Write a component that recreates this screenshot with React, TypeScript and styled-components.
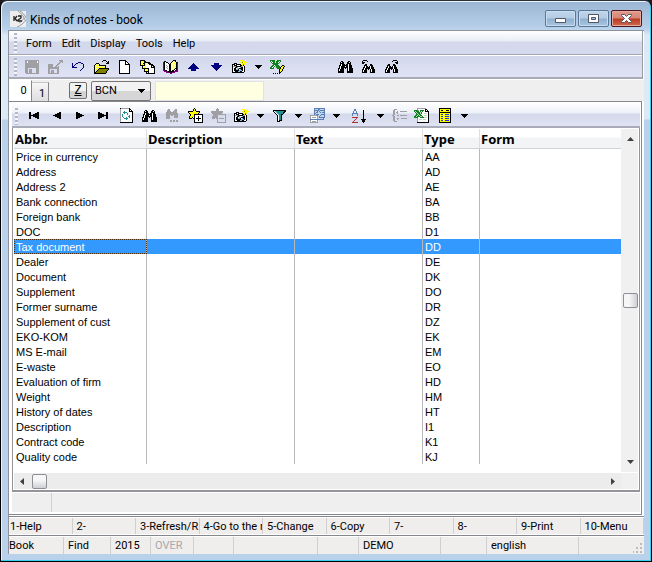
import React from "react";
import styled, { createGlobalStyle, css } from "styled-components";

/* ---------- pixel icons ---------- */

const palette: Record<string, string> = {
  k: "#000000",
  w: "#ffffff",
  y: "#ffff00",
  l: "#ffffa0",
  g: "#a0a0a4",
  d: "#60646c",
  n: "#000080",
  b: "#2038e0",
  c: "#7fb8d8",
  o: "#808000",
  p: "#800080",
  e: "#108020",
  f: "#b8d8b8",
  t: "#209090",
  r: "#b03030",
  s: "#5a7fb5",
  a: "#c4d4ea",
};

const art = {
  save: [
    "gggggggggggggg", "ggwgggggggggwg", "ggwgggggggggwg", "gggggggggggggg", "gggggggggggggg", "gggggggggggggg",
    "gggggggggggggg", "gggggggggggggg", "ggg........ggg", "ggg.ggg....ggg", "ggg.ggg....ggg", "ggg.ggg....ggg",
    "ggg.ggg....ggg", ".ggggggggggggg",
  ],
  exportFile: [
    "...........gggg", "............ggg", "...........gg.g", "..........gg...", "ggggg....gg....", "ggggg...gg.....",
    "ggggg..gg.g....", "ggggggggggg....", "ggggggggggg....", "gg.......gg....", "gg.ggg...gg....", "gg.ggg...gg....",
    "gg.ggg...gg....", "ggggggggggg....",
  ],
  undo: [
    "......nnn....", "n...nn...nn..", "n..n.......n.", "n.n........n.", "nn.........n.", "nnnnn......n.", "..........n..",
    ".........n...", "........n....",
  ],
  open: [
    ".........kkk...", "........k...k.k", ".............kk", "..kkk.......kkk", ".klylk.........", "klylykkkkkkk...",
    "kylylylylylk...", "klylylylylyk...", "kyly.kkkkkkkkkk", "kly.koooooooook", "ky.koooooooook.", "kykoooooooook..",
    "kkooooooooook..", "kkkkkkkkkkkk...",
  ],
  page: [
    "kkkkkkk....", "kwwwwwkk...", "kwwwwwkwk..", "kwwwwwkwwk.", "kwwwwwkkkkk", "kwwwwwwwwwk", "kwwwwwwwwwk",
    "kwwwwwwwwwk", "kwwwwwwwwwk", "kwwwwwwwwwk", "kwwwwwwwwwk", "kwwwwwwwwwk", "kwwwwwwwwwk", "kkkkkkkkkkk",
  ],
  pages: [
    "kkkkk..........", "kylykk.........", "klylkkkkkk.....", "kylkkylykkk....", "klylkylwwkkkk..", "kkkkkywwwwwkkk.",
    "..kylywwwwwkwkk", "..klylwwwwwkkkk", "..kkkkkkkwwwwwk", "....kylykwwwwwk", "....klylkwwwwwk", "....kkkkkwwwwwk",
    "......kykwwwwwk", "......kkkkkkkkk",
  ],
  book: [
    "..........kkk..", ".kk......kllk..", "pkwkk...kllllkk", "pkwwwk.klllylkp", "pkwwwwkkllllykp", "pkwgwwkkllyllkp",
    "pkwwgwkkllllykp", "pkwgwwkkllyllkp", "pkwwgwkkllllkkp", "pkwwwwkkllykwkp", "ppkkwwkklkkwkpp", ".ppppkkkkkkpppp",
    "...ppppkkppp...", ".......pp......",
  ],
  up: [
    "......n......", ".....nnn.....", "....nnnnn....", "...nnnnnnn...", "..nnnnnnnnn..", ".nnnnnnnnnnn.", "....nnnnn....",
    "....nnnnn....",
  ],
  down: [
    "....nnnnn....", "....nnnnn....", ".nnnnnnnnnnn.", "..nnnnnnnnn..", "...nnnnnnn...", "....nnnnn....", ".....nnn.....",
    "......n......",
  ],
  camera: [
    "........y.y..y.", ".........yyyy..", "........yyoyyyy", "..kkk....yyyy..", "kkkwkkkkkyyoyy.", "kwkkkwwwkkyk.y.",
    "kgggkkkkkggwk..", "kwwkkcwwckkwk..", "kwkkwcckkkkwk..", "kwkkcckwckkwk..", "kwkkkkkccckwk..", "kwwkkkcckkwwk..",
    "kkkkkkkkkkkk...",
  ],
  excelEdit: [
    "eeeee..eeee....", "eweee.eeewe....", ".ewee.eewe.....", "..eeeeeee......", "...eeeee.......", "..eeweeee...kk.",
    ".eewe.eeee.kyyk", "eewe..eeeekyyk.", "eeee...eeekyyk.", ".........kyyk..", ".........kyyk..", ".........kyk...",
    ".........kk....", "...k.k.k.k.....",
  ],
  find: [
    "...kk.....kk...", "..k.kk...kk.k..", "..kkkk...kkkk..", "..kwkkk.kkwkk..", ".kkwkkkkkkwkkk.", ".kwkkkkwkkwkkk.",
    ".kwkkkkkkkwkkk.", "kkwkkk.k.kwkkkk", "kwkkkk...kwkkkk", "kwkkkk...kwkkkk", "kkkkkk...kkkkkk", "kkkkkk...kkkkkk",
  ],
  findPrev: [
    ".kkkk........", "k....k.......", "kkk..........", "kk...........", "...kk...kk...", "..kkk...kkk..", "..kwkk.kwkk..",
    ".kkwkkkkwkkk.", ".kwkkkkkwkkk.", "kkwkk.k.kwkkk", "kwkkk...kwkkk", "kwkkk...kwkkk", "kkkkk...kkkkk",
  ],
  findNext: [
    "........kkkk.", ".......k....k", "..........kkk", "...........kk", "...kk...kk...", "..kkk...kkk..", "..kwkk.kwkk..",
    ".kkwkkkkwkkk.", ".kwkkkkkwkkk.", "kkwkk.k.kwkkk", "kwkkk...kwkkk", "kwkkk...kwkkk", "kkkkk...kkkkk",
  ],
  findMore: [
    "..gg.....gg.", ".ggg....ggg.", ".gggg..gggg.", "ggggggggggg.", "gggggggggggg", "gggggggggggg", "gggg.gg.gggg",
    "gggg....gggg", "gggg....gggg", "gggg........", "............", "....gg.gg.gg", "....gg.gg.gg",
  ],
  first: ["kk......kk", "kk....kkkk", "kk..kkkkkk", "kkkkkkkkkk", "kk..kkkkkk", "kk....kkkk", "kk......kk"],
  prev: ["......kk", "....kkkk", "..kkkkkk", "kkkkkkkk", "..kkkkkk", "....kkkk", "......kk"],
  next: ["kk......", "kkkk....", "kkkkkk..", "kkkkkkkk", "kkkkkk..", "kkkk....", "kk......"],
  last: ["kk......kk", "kkkk....kk", "kkkkkk..kk", "kkkkkkkkkk", "kkkkkk..kk", "kkkk....kk", "kk......kk"],
  refresh: [
    "kggggggggk...", "gwwwwwwwwkk..", "gwwwwwwwwkwk.", "gwwwtwwwwkkkk", "gwwttttwwwwwk", "gwwwtwwtwwwwk", "gwtwwwwtwwwwk",
    "gwtwwwwwwtwwk", "gwtwwwwwttwwk", "gwwtwwtwwtwwk", "gwwwttttwwwwk", "gwwwwwtwwwwwk", "gwwwwwwwwwwwk", "gwwwwwwwwwwwk",
    "kkkkkkkkkkkkk",
  ],
  starAdd: [
    "......k........", ".....kyk.......", ".....kyk.......", "kkkkkyyykkkk...", "kyyyyyyyyyyk...", ".kyyyyyyyyk....",
    "..kyyykkkkkkkkk", "..kyyykwwwwwwwk", ".kyyyykwwwkwwwk", ".kyykykwwwkwwwk", ".kkk.kkwkkkkkwk", "......kwwwkwwwk",
    "......kwwwkwwwk", "......kwwwwwwwk", "......kkkkkkkkk",
  ],
  starRemove: [
    "......g........", ".....ggg.......", ".....ggg.......", "gggggggggggg...", "gggggggggggg...", ".gggggggggg....",
    "..ggggggggggggg", "..ggggg.......g", ".gggggg.......g", ".gggggg.......g", ".ggg.gg.ggggg.g", "......g.......g",
    "......g.......g", "......g.......g", "......ggggggggg",
  ],
  filter: [
    "kkkkkkkkkkkkk", "kwcttttttttkk", ".kwcttttttkk.", "..kwctttttk..", "...kwcttkk...", "....kwttk....", "....kwttk....",
    "....kwttk....", "....kwttk....", "....kwttk....", "....kwkkk....", "....kkk......",
  ],
  grid: [
    "....sssssssssss", "....saaassaaaas", "....sssssasssss", "....saasasaaaas", "....sassaasasss", "....ssaaaaaaaas",
    "....sasssaassss", "gggggggsaasaaas", "gwwwwwwgasaaaas", "gwggggwgassssss", "gwwwwwwgaaaaas.", "ssssssssssssss.",
    "gwwwwwwg.......", "gwggggwg.......", "gggggggg.......",
  ],
  sort: [
    "...ss..........", "...ss.......k..", "..s..s......k..", "..s..s......k..", ".ssssss.....k..", ".s....s.....k..",
    ".s....s.....k..", "............k..", ".rrrrrr.....k..", ".....r......k..", "....r.....kkkkk", "...r.......kkk.",
    "..r........kkk.", ".rrrrrr.....k..",
  ],
  brace: [
    "..ggg..........", ".gg............", ".gg..g..ggggggg", ".gg.gg.........", ".gg..g.........", ".gg............",
    "gg...gg.ggggggg", ".gg............", ".gg............", ".gg..gg..gggggg", ".gg..g.........", ".gg............",
    "..ggg..........",
  ],
  excel: [
    "...ggggggggg....", "...gwwwwwwwkk...", "eeeegweeeewkwk..", "efeeewefewwkkkk.", ".efeeefewwwwwwk.", "..efeefewwfffwk.",
    "..eefeewwwwwwwk.", ".eefefeewwfffwk.", "eefeeeffewwwwwk.", "eeeewweeeefffwk.", "...gwwwwwwwwwwk.", "...gwfffwfffwwk.",
    "...gwwwwwwwwwwk.", "...gwwwwwwwwwwk.", "...kkkkkkkkkkkk.",
  ],
  sheet: [
    "kkkkkkkkkkkk", "kyyyyyyyyyyk", "kykkyyykkkyk", "kyyyyyyyyyyk", "kkkkkkkkkkkk", "kyyyyyyyyyyk", "kybbyybbbbyk",
    "kyyyyyyyyyyk", "kybbyybbbbyk", "kyyyyyyyyyyk", "kybbyybbbbyk", "kyyyyyyyyyyk", "kybbyybbbbyk", "kyyyyyyyyyyk",
    "kkkkkkkkkkkk",
  ],
  caret: ["kkkkkkk", ".kkkkk.", "..kkk..", "...k..."],
} satisfies Record<string, string[]>;

type IconName = keyof typeof art;

function tracePixels(rows: string[], left: number, top: number) {
  const paths: Record<string, string> = {};
  rows.forEach((row, y) => {
    let x = 0;
    while (x < row.length) {
      const tone = row[x];
      let end = x + 1;
      while (end < row.length && row[end] === tone) end++;
      if (tone !== ".") {
        const run = end - x;
        paths[tone] = (paths[tone] ?? "") + `M${x + left} ${y + top}h${run}v1h${-run}z`;
      }
      x = end;
    }
  });
  return Object.entries(paths);
}

function Icon({ name, width = 17 }: { name: IconName; width?: number }) {
  const rows = art[name];
  const cols = Math.max(...rows.map((r) => r.length));
  const left = Math.floor((width - cols) / 2);
  const top = Math.floor((16 - rows.length) / 2);
  return (
    <svg width={width} height={16} viewBox={`0 0 ${width} 16`} shapeRendering="crispEdges" aria-hidden="true">
      {tracePixels(rows, left, top).map(([tone, d]) => (
        <path key={tone} d={d} fill={palette[tone]} />
      ))}
    </svg>
  );
}

/* ---------- styles ---------- */

const ui = `Roboto, "Open Sans", sans-serif`;

const GlobalStyle = createGlobalStyle`
  *, *::before, *::after { box-sizing: border-box; }
  body { margin: 0; background: #1c1c20; font: 11px/16px ${ui}; color: #000; }
  button, input, select { font: inherit; color: inherit; margin: 0; padding: 0; border: 0; border-radius: 0; background: none; }
  svg { display: block; }
`;

const Frame = styled.main`
  display: flex;
  flex-direction: column;
  min-height: 100vh;
  padding: 0 7px 7px;
  border: 1px solid #000;
  border-top-color: #2c3038;
  border-radius: 7px 7px 0 0;
  background: linear-gradient(#9ab5d3, #b9d1ea 28px, #dce9f6 34px, #dce9f6 118px, #b9d1ea 119px);
  box-shadow: inset -1px -1px #35d0ee, inset 1px 1px #eef5fb;
`;

const TitleBar = styled.header`
  display: flex;
  align-items: center;
  gap: 4px;
  height: 29px;
  padding: 6px 2px 0;
`;

const Title = styled.h1`
  flex: 1;
  margin: 0;
  padding-top: 2px;
  font-size: 12px;
  font-weight: 400;
`;

const WindowButtons = styled.div`
  display: flex;
  gap: 2px;
  align-self: flex-start;
  margin-top: 3px;
`;

const WindowButton = styled.button<{ $danger?: boolean }>`
  display: grid;
  place-items: center;
  width: 31px;
  height: 17px;
  border: 1px solid ${(p) => (p.$danger ? "#4c1520" : "#5a7697")};
  border-radius: 2px;
  box-shadow: inset 0 0 0 1px ${(p) => (p.$danger ? "#e9a99c" : "#c9ddf0")};
  background: ${(p) =>
    p.$danger
      ? "linear-gradient(#e0988a, #d68576 48%, #b83a20 52%, #cf6a50)"
      : "linear-gradient(#c0d5ea, #b4cce3 48%, #91b0cd 52%, #a9c5df)"};
`;

const Client = styled.div`
  display: flex;
  flex: 1;
  flex-direction: column;
  min-width: 0;
  background: #fff;
  border: solid #8f9399;
  border-width: 1px 0 0 1px;
`;

const Bars = styled.div`
  margin-right: 1px;
  border-right: 1px solid #9a9ca2;
`;

const grip = css`
  &::before {
    content: "";
    flex: none;
    align-self: stretch;
    width: 3px;
    margin: 2px 0 1px;
    background: repeating-linear-gradient(#b4b8c4 0 2px, #f4f6fb 2px 4px);
  }
`;

const MenuBar = styled.nav`
  display: flex;
  align-items: center;
  height: 24px;
  padding-left: 5px;
  gap: 10px;
  border-bottom: 1px solid #a4a6ac;
  background: linear-gradient(#fff, #e9edf6 10px, #d3d8eb 11px, #d6daee);
  ${grip}
  &::before { margin-right: -1px; }
`;

const MenuItem = styled.button`
  height: 20px;
  padding-top: 3px;
`;

const ToolBar = styled.div<{ $glossy?: boolean }>`
  display: flex;
  align-items: center;
  height: ${(p) => (p.$glossy ? 26 : 24)}px;
  padding: ${(p) => (p.$glossy ? "3px 0 0 3px" : "0 0 0 5px")};
  border-top: 1px solid #fff;
  border-bottom: 2px solid #a9acb8;
  background: ${(p) =>
    p.$glossy ? "linear-gradient(#fff, #edf0f8 10px, #d3d8eb 11px, #dfe3f3)" : "linear-gradient(#d2d7eb, #dfe3f4)"};
  ${grip}
  &::before { margin-right: ${(p) => (p.$glossy ? 5 : 4)}px; }
`;

const ToolButton = styled.button<{ $wide?: boolean }>`
  display: grid;
  place-items: center;
  flex: none;
  width: ${(p) => (p.$wide ? 29 : 23)}px;
  height: 20px;
`;

const MoreButton = styled(ToolButton)`
  width: 15px;
`;

const Spacer = styled.span`
  width: 45px;
`;

const TabRow = styled.div`
  display: flex;
  align-items: center;
  height: 22px;
  border-top: 1px solid #fff;
  background: #efefef;
`;

const Tab = styled.button<{ $active?: boolean }>`
  align-self: flex-end;
  width: ${(p) => (p.$active ? 23 : 17)}px;
  height: ${(p) => (p.$active ? 21 : 19)}px;
  padding: ${(p) => (p.$active ? "0 0 0 7px" : "3px 0 0 4px")};
  border-right: 1px solid #85878c;
  border-top: 1px solid ${(p) => (p.$active ? "#fff" : "#c4c6ca")};
  background: ${(p) => (p.$active ? "#fff" : "linear-gradient(#f6f6f6, #dedee0)")};
  text-align: center;
`;

const KeyButton = styled.button`
  width: 18px;
  height: 17px;
  margin: 0 4px 0 20px;
  border: 1px solid #707070;
  border-radius: 2px;
  background: linear-gradient(#f2f2f2 50%, #d4d4d4 50%);
  font-size: 12px;
  line-height: 15px;
  text-decoration: underline;
`;

const SelectBox = styled.span`
  display: grid;
  align-items: center;
  grid-template-columns: 1fr 12px;
  width: 60px;
  height: 20px;
  border: 1px solid #777;
  border-radius: 2px;
  background: linear-gradient(#f2f2f2 50%, #d6d6d6 50%);
  select, svg { grid-row: 1; }
  select { grid-column: 1 / 3; height: 18px; padding-left: 3px; appearance: none; outline: 0; }
  svg { grid-column: 2; pointer-events: none; }
`;

const QuickInput = styled.input`
  width: 109px;
  height: 20px;
  margin-left: 4px;
  padding: 0 3px;
  border: 1px solid #dfe2ea;
  background: #ffffe1;
`;

const Panel = styled.section`
  display: flex;
  flex: 1;
  flex-direction: column;
  margin-right: 2px;
  padding: 0 1px 2px 3px;
  border: solid #85878e;
  border-width: 1px 1px 1px 0;
`;

const Browser = styled.div`
  display: grid;
  flex: 1;
  grid-template-columns: minmax(0, 1fr) 17px;
  grid-template-rows: 1fr 16px;
  padding: 1px 1px 1px;
  border: solid #93959b;
  border-width: 0 1px 2px 1px;
`;

const DataTable = styled.table`
  width: 100%;
  margin-bottom: 9px;
  table-layout: fixed;
  border-collapse: separate;
  border-spacing: 0;
  font: 11px/13px "Liberation Sans", Arial, sans-serif;
`;

const Col = styled.col<{ $w?: number }>`
  width: ${(p) => (p.$w ? `${p.$w}px` : "auto")};
`;

const HeadCell = styled.th`
  height: 20px;
  padding: 0 0 0 1px;
  border-right: 1px solid #dcdee2;
  border-bottom: 1px solid #d0d2d6;
  background: linear-gradient(#fff 8px, #f3f4f6 9px);
  font: bold 13px/18px "Noto Sans", "Open Sans", sans-serif;
  text-align: left;
  &:last-child { border-right: 0; }
`;

const Cell = styled.td`
  height: 15px;
  padding: 2px 0 0 2px;
  border-right: 1px solid #b8b8b8;
  overflow: hidden;
  white-space: nowrap;
  &:last-child { border-right: 0; }
`;

const Row = styled.tr<{ $selected?: boolean }>`
  ${(p) =>
    p.$selected &&
    css`
      color: #fff;
      background: #3399ff;
      td:first-child { outline: 1px dotted #4a2a08; outline-offset: -1px; }
    `}
`;

const VScroll = styled.div`
  display: flex;
  flex-direction: column;
  align-items: center;
  margin-bottom: 1px;
  padding: 8px 0 8px 1px;
  background: #f0f0f0;
`;

const HScroll = styled.div`
  display: flex;
  align-items: center;
  padding: 0 6px;
  background: #ececec;
`;

const Corner = styled.div`
  background: #f0f0f0;
`;

const Track = styled.div<{ $share: number }>`
  flex: ${(p) => p.$share};
`;

const Thumb = styled.div<{ $vertical?: boolean }>`
  flex: none;
  width: 15px;
  height: 15px;
  border: 1px solid #8e8f94;
  border-radius: 2px;
  background: linear-gradient(${(p) => (p.$vertical ? "90deg" : "180deg")}, #f6f6f6 40%, #cfd0d4);
`;

const InfoBar = styled.div`
  height: 19px;
  margin-top: 1px;
  background: #efefef;
  &::before { content: ""; display: block; width: 40px; height: 100%; border-right: 1px solid #d0d0d0; }
`;

const KeyBar = styled.div`
  display: grid;
  grid-template-columns: repeat(10, minmax(0, 1fr));
  margin-top: 1px;
  padding: 1px 0;
  border-top: 1px solid #85878e;
  border-bottom: 1px solid #85878e;
`;

const FunctionKey = styled.button`
  height: 16px;
  padding: 1px 0 0 4px;
  border-right: 1px solid #d0cece;
  background: #f0eded;
  line-height: 15px;
  overflow: hidden;
  text-align: left;
  white-space: nowrap;
  &:first-child { padding-left: 1px; }
`;

const StatusBar = styled.footer`
  display: flex;
  height: 18px;
  border-top: 1px solid #fff;
  background: #f0eded;
`;

const StatusCell = styled.span<{ $w?: number; $dim?: boolean }>`
  display: flex;
  align-items: center;
  flex: ${(p) => (p.$w ? `0 0 ${p.$w}px` : "1")};
  padding-left: 4px;
  border-right: ${(p) => (p.$w ? "1px solid #d0cece" : "0")};
  color: ${(p) => (p.$dim ? "#a8a8a8" : "#000")};
  &:first-child { padding-left: 0; }
`;

const Grip = styled.svg`
  align-self: flex-end;
`;

/* ---------- data ---------- */

const records: [string, string][] = [
  ["Price in currency", "AA"], ["Address", "AD"], ["Address 2", "AE"], ["Bank connection", "BA"], ["Foreign bank", "BB"],
  ["DOC", "D1"], ["Tax document", "DD"], ["Dealer", "DE"], ["Document", "DK"], ["Supplement", "DO"],
  ["Former surname", "DR"], ["Supplement of cust", "DZ"], ["EKO-KOM", "EK"], ["MS E-mail", "EM"], ["E-waste", "EO"],
  ["Evaluation of firm", "HD"], ["Weight", "HM"], ["History of dates", "HT"], ["Description", "I1"],
  ["Contract code", "K1"], ["Quality code", "KJ"],
];

type Tool = { icon: IconName; label: string; menu?: boolean; wide?: boolean };

const mainTools: Tool[] = [
  { icon: "save", label: "Save" }, { icon: "exportFile", label: "Export" }, { icon: "undo", label: "Undo" },
  { icon: "open", label: "Open" }, { icon: "page", label: "New" }, { icon: "pages", label: "Copy" },
  { icon: "book", label: "Book" }, { icon: "up", label: "Up" }, { icon: "down", label: "Down" },
  { icon: "camera", label: "Snapshot", menu: true }, { icon: "excelEdit", label: "Edit in Excel" },
];

const searchTools: Tool[] = [
  { icon: "find", label: "Find" }, { icon: "findPrev", label: "Find previous" }, { icon: "findNext", label: "Find next" },
];

const browseTools: Tool[] = [
  { icon: "first", label: "First" }, { icon: "prev", label: "Previous" }, { icon: "next", label: "Next" },
  { icon: "last", label: "Last" }, { icon: "refresh", label: "Refresh" }, { icon: "find", label: "Find" },
  { icon: "findMore", label: "Find more" }, { icon: "starAdd", label: "Add bookmark" },
  { icon: "starRemove", label: "Remove bookmark" }, { icon: "camera", label: "Snapshot", menu: true },
  { icon: "filter", label: "Filter", menu: true }, { icon: "grid", label: "Columns", menu: true },
  { icon: "sort", label: "Sort", menu: true, wide: true }, { icon: "brace", label: "Group" },
  { icon: "excel", label: "Excel" }, { icon: "sheet", label: "Sheet", menu: true },
];

const functionKeys = [
  "1-Help", "2-", "3-Refresh/R", "4-Go to the r", "5-Change", "6-Copy", "7-", "8-", "9-Print", "10-Menu",
];

const status: { text?: string; w?: number; dim?: boolean }[] = [
  { text: "Book", w: 55 }, { text: "Find", w: 47 }, { text: "2015", w: 40 }, { text: "OVER", w: 43, dim: true },
  { w: 40 }, { w: 84 }, { w: 41 }, { text: "DEMO", w: 82 }, { w: 46 }, { text: "english", w: 92 }, {},
];

function Tools({ items }: { items: Tool[] }) {
  return (
    <>
      {items.map((tool) => (
        <React.Fragment key={tool.label}>
          <ToolButton $wide={tool.wide} aria-label={tool.label}>
            <Icon name={tool.icon} />
          </ToolButton>
          {tool.menu && (
            <MoreButton aria-label={`${tool.label} options`}>
              <Icon name="caret" width={7} />
            </MoreButton>
          )}
        </React.Fragment>
      ))}
    </>
  );
}

function Arrow({ d, w, h }: { d: string; w: number; h: number }) {
  return (
    <svg width={w} height={h} viewBox={`0 0 ${w} ${h}`} aria-hidden="true">
      <path d={d} fill="#404040" />
    </svg>
  );
}

export default function App() {
  return (
    <Frame>
      <GlobalStyle />
      <TitleBar>
        <svg width="16" height="16" viewBox="0 0 16 16" aria-hidden="true">
          <path d="M0 0h16v16H0z" fill="#ededed" />
          <path d="M8 0c4 3 6 6 7 9M10 0c3 2 5 4 6 7M7 16c3-1 7-4 9-7M9 12c2-1 4-3 5-5" fill="none" stroke="#9a9a9a" />
          <path d="M4 5v5M7 5 5 7.5 7 10M8 5h3v2L8 9v1h4" fill="none" stroke="#222" strokeWidth="1.3" />
        </svg>
        <Title>Kinds of notes - book</Title>
        <WindowButtons>
          <WindowButton aria-label="Minimize">
            <svg width="11" height="9" viewBox="0 0 11 9">
              <path d="M.5 4.500h10v4H.5z" fill="#fff" stroke="#535666" />
            </svg>
          </WindowButton>
          <WindowButton aria-label="Maximize">
            <svg width="11" height="9" viewBox="0 0 11 9">
              <path d="M.5.5h10v8H.5zM3.500 3.500v2h4v-2z" fill="#fff" fillRule="evenodd" stroke="#535666" />
            </svg>
          </WindowButton>
          <WindowButton $danger aria-label="Close">
            <svg width="11" height="9" viewBox="0 0 11 9">
              <path d="M.5.5h3l2 2 2-2h3v1l-3 3 3 3v1h-3l-2-2-2 2h-3v-1l3-3-3-3z" fill="#fff" stroke="#535666" />
            </svg>
          </WindowButton>
        </WindowButtons>
      </TitleBar>

      <Client>
        <Bars>
          <MenuBar>
            {["Form", "Edit", "Display", "Tools", "Help"].map((m) => (
              <MenuItem key={m}>{m}</MenuItem>
            ))}
          </MenuBar>
          <ToolBar>
            <Tools items={mainTools} />
            <Spacer />
            <Tools items={searchTools} />
          </ToolBar>
        </Bars>

        <TabRow>
          <Tab $active>0</Tab>
          <Tab>1</Tab>
          <KeyButton>Z</KeyButton>
          <SelectBox>
            <select aria-label="Sort key" defaultValue="BCN">
              <option>BCN</option>
            </select>
            <Icon name="caret" width={7} />
          </SelectBox>
          <QuickInput aria-label="Quick search" />
        </TabRow>

        <Panel>
          <ToolBar $glossy>
            <Tools items={browseTools} />
          </ToolBar>
          <Browser>
            <DataTable>
              <colgroup>
                <Col $w={133} />
                <Col $w={148} />
                <Col $w={128} />
                <Col $w={57} />
                <Col />
              </colgroup>
              <thead>
                <tr>
                  {["Abbr.", "Description", "Text", "Type", "Form"].map((h) => (
                    <HeadCell key={h} scope="col">{h}</HeadCell>
                  ))}
                </tr>
              </thead>
              <tbody>
                {records.map(([name, type]) => (
                  <Row key={type} $selected={type === "DD"}>
                    <Cell>{name}</Cell>
                    <Cell />
                    <Cell />
                    <Cell>{type}</Cell>
                    <Cell />
                  </Row>
                ))}
              </tbody>
            </DataTable>
            <VScroll>
              <Arrow d="M0 4 3.500 0 7 4z" w={7} h={4} />
              <Track $share={153} />
              <Thumb $vertical />
              <Track $share={153} />
              <Arrow d="M0 0h7L3.500 4z" w={7} h={4} />
            </VScroll>
            <HScroll>
              <Arrow d="M4 0v7L0 3.500z" w={4} h={7} />
              <Track $share={8} />
              <Thumb />
              <Track $share={564} />
              <Arrow d="M0 0l4 3.500L0 7z" w={4} h={7} />
            </HScroll>
            <Corner />
          </Browser>
          <InfoBar />
        </Panel>

        <KeyBar>
          {functionKeys.map((k) => (
            <FunctionKey key={k}>{k}</FunctionKey>
          ))}
        </KeyBar>
        <StatusBar>
          {status.map((s, i) => (
            <StatusCell key={i} $w={s.w} $dim={s.dim}>{s.text}</StatusCell>
          ))}
          <Grip width="11" height="11" viewBox="0 0 11 11" aria-hidden="true">
            <path d="M7 0h2v2H7zM3 4h2v2H3zM7 4h2v2H7zM0 8h1v2H0zM3 8h2v2H3zM7 8h2v2H7z" fill="#bbb" />
          </Grip>
        </StatusBar>
      </Client>
    </Frame>
  );
}
